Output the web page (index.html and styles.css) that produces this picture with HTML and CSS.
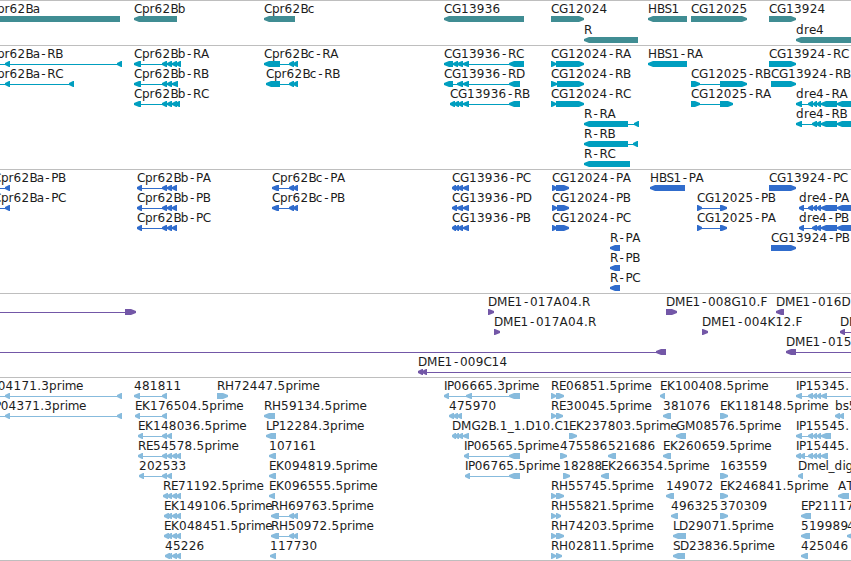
FILE: index.html
```html
<!DOCTYPE html>
<html lang="en">
<head>
    <meta charset="UTF-8">
    <title>Genome tracks</title>
    <link rel="stylesheet" href="styles.css">
</head>
<body>
    <div class="browser">
        <svg class="track genes" id="genes"></svg>
        <svg class="track transcripts" id="transcripts"></svg>
        <svg class="track proteins" id="proteins"></svg>
        <svg class="track clones" id="clones"></svg>
        <svg class="track ests" id="ests"></svg>
    </div>
    <script src="tracks.js"></script>
</body>
</html>
```

FILE: styles.css
```css
body {
    margin: 0;
    background: #fff;
}

.browser {
    display: flex;
    flex-direction: column;
    width: 851px;
    height: 561px;
    box-sizing: border-box;
    overflow: hidden;
    border-bottom: 1px solid #bebebe;
}

.track {
    display: block;
    flex: none;
    width: 100%;
    box-sizing: border-box;
    border-top: 1px solid #bebebe;
    overflow: hidden;
}

/* one colour per track */
.genes {
    height: 45px;
    color: #408d93;
}

.transcripts {
    height: 124px;
    color: #009ebf;
}

.proteins {
    height: 124px;
    color: #306ccc;
}

.clones {
    height: 84px;
    color: #7357a7;
}

.ests {
    height: 183px;
    color: #87bbdd;
}

.feature {
    fill: currentColor;
}

.label {
    fill: #1c1c1c;
    font-family: "DejaVu Sans", sans-serif;
    font-size: 12px;
}
```

FILE: tracks.js
```js
var NS = "http://www.w3.org/2000/svg";

// Glyph advances in pixels, digits are 7.9
var advance = {
    A: 8.5, B: 7.4, C: 8, D: 9, E: 7, F: 7, G: 9, H: 9, I: 3, K: 8, L: 6, M: 10.5,
    P: 6.7, R: 8, S: 7, T: 7, a: 7, b: 7.8, c: 7, d: 8, e: 7, g: 8, i: 3, l: 3,
    m: 11.4, p: 7.6, r: 5, s: 6, ".": 4, "_": 6, "-": 7.5
};

// [row, name, label x, direction, blocks]
var genes = [
    [0, "Cpr62Ba", -11, "l", [[-11, 120]]],
    [0, "Cpr62Bb", 134, "l", [[134, 177]]],
    [0, "Cpr62Bc", 264, "l", [[264, 295]]],
    [0, "CG13936", 444, "l", [[444, 524]]],
    [0, "CG12024", 551, "r", [[551, 584]]],
    [0, "HBS1", 648, "l", [[648, 687]]],
    [0, "CG12025", 691, "r", [[691, 747]]],
    [0, "CG13924", 769, "r", [[769, 796]]],
    [1, "R", 584, "l", [[584, 638]]],
    [1, "dre4", 796, "l", [[796, 860]]]
];

var transcripts = [
    [0, "Cpr62Ba-RB", -11, "l", [[-20, -10], [5, 10], [117, 122]]],
    [1, "Cpr62Ba-RC", -11, "l", [[-20, -10], [5, 10], [69, 74]]],
    [0, "Cpr62Bb-RA", 134, "l", [[134, 141], [162, 167], [167, 172], [172, 177], [176, 181]]],
    [1, "Cpr62Bb-RB", 134, "l", [[134, 141], [162, 167], [167, 172], [172, 178]]],
    [2, "Cpr62Bb-RC", 134, "l", [[134, 141], [162, 167], [167, 172], [172, 177], [175, 180]]],
    [0, "Cpr62Bc-RA", 264, "l", [[264, 280], [289, 294], [293, 298]]],
    [1, "Cpr62Bc-RB", 266, "l", [[266, 280], [289, 294], [293, 298]]],
    [0, "CG13936-RC", 444, "l", [[444, 453], [453, 458], [457, 463], [463, 469], [509, 524]]],
    [1, "CG13936-RD", 444, "l", [[444, 453], [457, 463], [463, 469], [509, 520]]],
    [2, "CG13936-RB", 450, "l", [[450, 455], [454, 459], [458, 463], [463, 469], [509, 520]]],
    [0, "CG12024-RA", 551, "r", [[551, 556], [556, 584]]],
    [1, "CG12024-RB", 551, "r", [[551, 557], [557, 584]]],
    [2, "CG12024-RC", 551, "r", [[551, 556], [556, 584]]],
    [3, "R-RA", 584, "l", [[584, 628], [634, 639]]],
    [4, "R-RB", 584, "l", [[584, 628], [633, 638]]],
    [5, "R-RC", 584, "l", [[584, 630]]],
    [0, "HBS1-RA", 648, "l", [[648, 687]]],
    [1, "CG12025-RB", 691, "r", [[691, 700], [720, 747]]],
    [2, "CG12025-RA", 691, "r", [[691, 700], [720, 733]]],
    [0, "CG13924-RC", 769, "r", [[769, 796]]],
    [1, "CG13924-RB", 771, "r", [[771, 796]]],
    [2, "dre4-RA", 796, "l", [[796, 802], [808, 813], [813, 817], [817, 821], [821, 837], [837, 855]]],
    [3, "dre4-RB", 796, "l", [[796, 802], [812, 817], [816, 821], [821, 837], [837, 855]]]
];

var proteins = [
    [0, "Cpr62Ba-PB", -7, "l", [[-20, -10], [5, 10]]],
    [1, "Cpr62Ba-PC", -7, "l", [[-20, -10], [5, 10]]],
    [0, "Cpr62Bb-PA", 137, "l", [[137, 142], [162, 167], [167, 172], [172, 177]]],
    [1, "Cpr62Bb-PB", 137, "l", [[137, 142], [162, 167], [167, 172], [172, 177]]],
    [2, "Cpr62Bb-PC", 137, "l", [[137, 142], [162, 167], [167, 172], [172, 177]]],
    [0, "Cpr62Bc-PA", 272, "l", [[272, 279], [289, 294], [293, 298]]],
    [1, "Cpr62Bc-PB", 272, "l", [[272, 279], [289, 294], [293, 298]]],
    [0, "CG13936-PC", 452, "l", [[452, 456], [455, 459], [458, 463], [463, 469]]],
    [1, "CG13936-PD", 452, "l", [[452, 457], [457, 463], [463, 469]]],
    [2, "CG13936-PB", 452, "l", [[452, 456], [455, 459], [458, 463], [463, 469]]],
    [0, "CG12024-PA", 552, "r", [[552, 557], [556, 569]]],
    [1, "CG12024-PB", 552, "r", [[552, 557], [557, 569]]],
    [2, "CG12024-PC", 552, "r", [[552, 557], [556, 569]]],
    [3, "R-PA", 610, "l", [[610, 620]]],
    [4, "R-PB", 610, "l", [[610, 620]]],
    [5, "R-PC", 610, "l", [[610, 620]]],
    [0, "HBS1-PA", 650, "l", [[650, 685]]],
    [1, "CG12025-PB", 697, "r", [[697, 702], [720, 727]]],
    [2, "CG12025-PA", 697, "r", [[697, 702], [720, 727]]],
    [0, "CG13924-PC", 769, "r", [[769, 796]]],
    [3, "CG13924-PB", 771, "r", [[771, 796]]],
    [1, "dre4-PA", 799, "l", [[799, 804], [808, 813], [813, 817], [817, 821], [821, 837], [837, 855]]],
    [2, "dre4-PB", 799, "l", [[799, 804], [812, 817], [816, 821], [821, 837], [837, 855]]]
];

var clones = [
    [0, "", 0, "r", [[-20, -10], [125, 136]]],
    [2, "", 0, "l", [[-20, -10], [656, 666]]],
    [0, "DME1-017A04.R", 488, "r", [[488, 494]]],
    [1, "DME1-017A04.R", 494, "r", [[494, 500]]],
    [0, "DME1-008G10.F", 666, "r", [[666, 677]]],
    [1, "DME1-004K12.F", 702, "r", [[702, 708]]],
    [0, "DME1-016D", 776, "l", [[776, 784]]],
    [1, "DM", 840, "l", [[840, 845], [860, 870]]],
    [2, "DME1-015", 786, "l", [[786, 796], [860, 870]]],
    [3, "DME1-009C14", 418, "l", [[418, 423], [422, 427], [860, 870]]]
];

var ests = [
    [0, "IP04171.3prime", -12, "l", [[-20, -10], [5, 10], [117, 122]]],
    [0, "481811", 134, "l", [[134, 140], [162, 167]]],
    [0, "RH72447.5prime", 217, "r", [[217, 228]]],
    [0, "IP06665.3prime", 444, "l", [[444, 449], [466, 472], [509, 520]]],
    [0, "RE06851.5prime", 551, "r", [[551, 556], [556, 564]]],
    [0, "EK100408.5prime", 660, "l", [[660, 665]]],
    [0, "IP15345.", 796, "l", [[796, 802], [808, 813], [813, 817], [817, 821], [821, 827], [860, 870]]],

    [1, "IP04371.3prime", -9, "l", [[-20, -10], [5, 10], [117, 122]]],
    [1, "EK176504.5prime", 135, "l", [[135, 140], [162, 167]]],
    [1, "RH59134.5prime", 264, "l", [[264, 275]]],
    [1, "475970", 449, "l", [[449, 454], [453, 458], [457, 462]]],
    [1, "RE30045.5prime", 551, "r", [[551, 556], [556, 563]]],
    [1, "381076", 663, "l", [[663, 671]]],
    [1, "EK118148.5prime", 720, "r", [[720, 728]]],
    [1, "bs5", 835, "l", [[835, 840], [839, 844]]],

    [2, "EK148036.5prime", 138, "l", [[138, 143], [162, 167], [167, 172]]],
    [2, "LP12284.3prime", 266, "l", [[266, 276]]],
    [2, "DMG2B.1_1.D10.C1", 452, "l", [[452, 456], [455, 459], [458, 463], [463, 469]]],
    [2, "EK237803.5prime", 569, "r", [[569, 577]]],
    [2, "GM08576.5prime", 676, "l", [[676, 686]]],
    [2, "IP15545.", 796, "l", [[796, 802], [808, 813], [813, 817], [817, 821], [821, 831]]],

    [3, "RE54578.5prime", 138, "l", [[138, 143], [162, 167], [167, 172], [172, 177], [176, 181]]],
    [3, "107161", 269, "l", [[269, 276]]],
    [3, "IP06565.5prime", 464, "l", [[464, 469], [509, 520]]],
    [3, "475586", 560, "r", [[560, 567]]],
    [3, "521686", 608, "l", [[608, 616]]],
    [3, "EK260659.5prime", 663, "l", [[663, 671]]],
    [3, "IP15445.", 796, "l", [[796, 801], [800, 805], [808, 813], [813, 817], [817, 821], [821, 828]]],

    [4, "202533", 139, "l", [[139, 144], [162, 167], [167, 172]]],
    [4, "EK094819.5prime", 269, "l", [[269, 276]]],
    [4, "IP06765.5prime", 465, "l", [[465, 470], [509, 520]]],
    [4, "18288", 563, "r", [[563, 570]]],
    [4, "EK266354.5prime", 601, "l", [[601, 609]]],
    [4, "163559", 720, "r", [[720, 728]]],
    [4, "Dmel_dig", 798, "l", [[798, 803]]],

    [5, "RE71192.5prime", 163, "l", [[163, 168], [167, 172], [172, 177], [176, 181]]],
    [5, "EK096555.5prime", 269, "l", [[269, 275]]],
    [5, "RH55745.5prime", 551, "r", [[551, 556], [556, 564]]],
    [5, "149072", 666, "l", [[666, 674]]],
    [5, "EK246841.5prime", 720, "r", [[720, 728]]],
    [5, "AT", 838, "l", [[838, 849]]],

    [6, "EK149106.5prime", 164, "l", [[164, 169], [167, 172], [172, 177], [176, 181]]],
    [6, "RH69763.5prime", 271, "l", [[271, 279], [289, 294], [293, 298]]],
    [6, "RH55821.5prime", 551, "r", [[551, 556], [556, 561]]],
    [6, "496325", 671, "l", [[671, 678]]],
    [6, "370309", 720, "r", [[720, 728]]],
    [6, "EP21117", 801, "l", [[801, 811]]],

    [7, "EK048451.5prime", 164, "l", [[164, 169], [167, 172], [172, 177], [176, 181]]],
    [7, "RH50972.5prime", 271, "l", [[271, 279], [289, 294], [293, 298]]],
    [7, "RH74203.5prime", 551, "r", [[551, 556], [556, 564]]],
    [7, "LD29071.5prime", 673, "l", [[673, 686]]],
    [7, "519989", 801, "l", [[801, 810]]],
    [7, "4", 847, "l", [[847, 855]]],

    [8, "45226", 165, "l", [[165, 170], [168, 172], [172, 177], [176, 181]]],
    [8, "117730", 270, "l", [[270, 276]]],
    [8, "RH02811.5prime", 551, "r", [[551, 556], [556, 562]]],
    [8, "SD23836.5prime", 673, "l", [[673, 685]]],
    [8, "425046", 801, "l", [[801, 808]]]
];

function add(parent, tag, attrs) {
    var el = document.createElementNS(NS, tag);
    for (var key in attrs) {
        el.setAttribute(key, attrs[key]);
    }
    parent.appendChild(el);
    return el;
}

// x position of every glyph; the narrow hyphen is centred in its cell
function glyphPositions(text, x) {
    return text.split("").map(function(c) {
        var pos = c === "-" ? x + 1.5 : x;
        x += advance[c] || 7.9;
        return pos.toFixed(1);
    }).join(" ");
}

// Block with a pointed end, 6px high
function blockPoints(x0, x1, y, dir) {
    var head = Math.min(5, x1 - x0 - 1);
    if (dir === "l") {
        return [x0, y + 2, x0 + head, y, x1, y, x1, y + 6, x0 + head, y + 6, x0, y + 4].join(" ");
    }
    return [x1, y + 2, x1 - head, y, x0, y, x0, y + 6, x1 - head, y + 6, x1, y + 4].join(" ");
}

function drawTrack(id, features, pitch) {
    var svg = document.getElementById(id);
    features.forEach(function(f) {
        var top = f[0] * pitch;
        var blocks = f[4];
        var start = blocks[0][0];
        var end = blocks[blocks.length - 1][1];
        var group = add(svg, "g", { "class": "feature" });
        if (blocks.length > 1) {
            add(group, "rect", { x: start, y: top + 18, width: end - start, height: 1 });
        }
        blocks.forEach(function(b) {
            add(group, "polygon", { points: blockPoints(b[0], b[1], top + 15, f[3]) });
        });
        if (f[1]) {
            add(svg, "text", { "class": "label", x: glyphPositions(f[1], f[2]), y: top + 12 }).textContent = f[1];
        }
    });
}

drawTrack("genes", genes, 21);
drawTrack("transcripts", transcripts, 20);
drawTrack("proteins", proteins, 20);
drawTrack("clones", clones, 20);
drawTrack("ests", ests, 20);
```
